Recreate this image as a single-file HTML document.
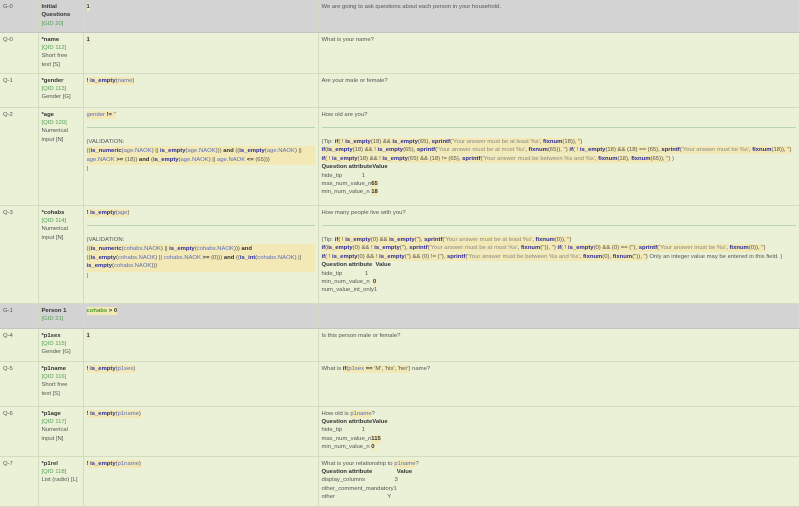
<!DOCTYPE html>
<html><head><meta charset="utf-8"><style>
*{margin:0;padding:0;box-sizing:border-box}
body{width:800px;height:505px;overflow:hidden;background:#eaf1d6;font-family:"Liberation Sans",sans-serif;font-size:5.9px;line-height:8.4px;color:#555}
table{border-collapse:collapse;table-layout:fixed;width:800px}
td{vertical-align:top;padding:3px 3px;border-bottom:1px solid #d4dcc0;border-right:1px solid #d4dcc0}
tr.g td{background:#d3d3d3;border-bottom:1px solid #c4c4c4}
b{color:#333}
.q{color:#55a055}
.h{background:#f2e9b6;padding:1px 0}
.f{color:#2a2a9c;font-weight:bold}
.v{color:#5a6ec0}
.n{color:#333;font-weight:bold}
.s{color:#888}
.gr{color:#4a9a2a;font-weight:bold}
hr{border:0;border-top:1px solid #b8d4b0;margin:8px 0 10px}
.blk{background:#f2e9b6;display:block;padding:1px 0}
</style></head><body>
<table>
<colgroup><col style="width:38px"><col style="width:45px"><col style="width:235px"><col></colgroup>
<tr class="g" style="height:32px"><td>G-0</td><td><b>Initial Questions</b><br><span class="q">[GID 20]</span></td><td><span class="h n">1</span></td><td>We are going to ask questions about each person in your household.</td></tr>
<tr style="height:41px"><td>Q-0</td><td><b>*name</b><br><span class="q">[QID 112]</span><br>Short free<br>text [S]</td><td><span class="h n">1</span></td><td>What is your name?</td></tr>
<tr style="height:34px"><td>Q-1</td><td><b>*gender</b><br><span class="q">[QID 113]</span><br>Gender [G]</td><td><span class="h"><span class="n">! </span><span class="f">is_empty</span>(<span class="v">name</span>)</span></td><td>Are your male or female?</td></tr>
<tr style="height:98px"><td>Q-2</td><td><b>*age</b><br><span class="q">[QID 120]</span><br>Numerical input [N]</td><td><span class="h"><span class="v">gender</span> <b>!=</b> ''</span><hr>(VALIDATION:<span class="blk">((<span class="f">is_numeric</span>(<span class="v">age.NAOK</span>) || <span class="f">is_empty</span>(<span class="v">age.NAOK</span>))) <b>and</b> ((<span class="f">is_empty</span>(<span class="v">age.NAOK</span>) || <span class="v">age.NAOK</span> <b>&gt;=</b> (18)) <b>and</b> (<span class="f">is_empty</span>(<span class="v">age.NAOK</span>) || <span class="v">age.NAOK</span> <b>&lt;=</b> (65)))</span>)</td>
<td>How old are you?<hr>(Tip: <span class="h"><span class="f">if</span>( ! <span class="f">is_empty</span>(18) &amp;&amp; <span class="f">is_empty</span>(65), <span class="f">sprintf</span>(<span class="s">'Your answer must be at least %s'</span>, <span class="f">fixnum</span>(18)), '')</span><br><span class="h"><span class="f">if</span>(<span class="f">is_empty</span>(18) &amp;&amp; ! <span class="f">is_empty</span>(65), <span class="f">sprintf</span>(<span class="s">'Your answer must be at most %s'</span>, <span class="f">fixnum</span>(65)), '') <span class="f">if</span>( ! <span class="f">is_empty</span>(18) &amp;&amp; (18) == (65), <span class="f">sprintf</span>(<span class="s">'Your answer must be %s'</span>, <span class="f">fixnum</span>(18)), '')</span><br><span class="h"><span class="f">if</span>( ! <span class="f">is_empty</span>(18) &amp;&amp; ! <span class="f">is_empty</span>(65) &amp;&amp; (18) != (65), <span class="f">sprintf</span>(<span class="s">'Your answer must be between %s and %s'</span>, <span class="f">fixnum</span>(18), <span class="f">fixnum</span>(65)), '')</span> )<br><b>Question attributeValue</b><br>hide_tip&nbsp;&nbsp;&nbsp;&nbsp;&nbsp;&nbsp;&nbsp;&nbsp;&nbsp;&nbsp;&nbsp;&nbsp;1<br>max_num_value_n<span class="h n">65</span><br>min_num_value_n <span class="h n">18</span></td></tr>
<tr style="height:98px"><td>Q-3</td><td><b>*cohabs</b><br><span class="q">[QID 114]</span><br>Numerical input [N]</td><td><span class="h"><span class="n">! </span><span class="f">is_empty</span>(<span class="v">age</span>)</span><hr>(VALIDATION:<span class="blk">((<span class="f">is_numeric</span>(<span class="v">cohabs.NAOK</span>) || <span class="f">is_empty</span>(<span class="v">cohabs.NAOK</span>))) <b>and</b><br>((<span class="f">is_empty</span>(<span class="v">cohabs.NAOK</span>) || <span class="v">cohabs.NAOK</span> <b>&gt;=</b> (0))) <b>and</b> ((<span class="f">is_int</span>(<span class="v">cohabs.NAOK</span>) ||<br><span class="f">is_empty</span>(<span class="v">cohabs.NAOK</span>)))</span>)</td>
<td>How many people live with you?<hr>(Tip: <span class="h"><span class="f">if</span>( ! <span class="f">is_empty</span>(0) &amp;&amp; <span class="f">is_empty</span>(''), <span class="f">sprintf</span>(<span class="s">'Your answer must be at least %s'</span>, <span class="f">fixnum</span>(0)), '')</span><br><span class="h"><span class="f">if</span>(<span class="f">is_empty</span>(0) &amp;&amp; ! <span class="f">is_empty</span>(''), <span class="f">sprintf</span>(<span class="s">'Your answer must be at most %s'</span>, <span class="f">fixnum</span>('')), '') <span class="f">if</span>( ! <span class="f">is_empty</span>(0) &amp;&amp; (0) == (''), <span class="f">sprintf</span>(<span class="s">'Your answer must be %s'</span>, <span class="f">fixnum</span>(0)), '')</span><br><span class="h"><span class="f">if</span>( ! <span class="f">is_empty</span>(0) &amp;&amp; ! <span class="f">is_empty</span>('') &amp;&amp; (0) != (''), <span class="f">sprintf</span>(<span class="s">'Your answer must be between %s and %s'</span>, <span class="f">fixnum</span>(0), <span class="f">fixnum</span>('')), '')</span> Only an integer value may be entered in this field. )<br><b>Question attribute&nbsp; Value</b><br>hide_tip&nbsp;&nbsp;&nbsp;&nbsp;&nbsp;&nbsp;&nbsp;&nbsp;&nbsp;&nbsp;&nbsp;&nbsp;&nbsp;&nbsp;1<br>min_num_value_n&nbsp; <span class="h n">0</span><br>num_value_int_only1</td></tr>
<tr class="g" style="height:25px"><td>G-1</td><td><b>Person 1</b><br><span class="q">[GID 21]</span></td><td><span class="h"><span class="gr">cohabs</span> <b>&gt; 0</b></span></td><td></td></tr>
<tr style="height:33px"><td>Q-4</td><td><b>*p1sex</b><br><span class="q">[QID 115]</span><br>Gender [G]</td><td><span class="h n">1</span></td><td>Is this person male or female?</td></tr>
<tr style="height:45px"><td>Q-5</td><td><b>*p1name</b><br><span class="q">[QID 116]</span><br>Short free<br>text [S]</td><td><span class="h"><span class="n">! </span><span class="f">is_empty</span>(<span class="v">p1sex</span>)</span></td><td>What is <span class="h"><span class="f">if</span>(<span class="v">p1sex</span> <b>==</b> 'M', 'his', 'her')</span> name?</td></tr>
<tr style="height:50px"><td>Q-6</td><td><b>*p1age</b><br><span class="q">[QID 117]</span><br>Numerical input [N]</td><td><span class="h"><span class="n">! </span><span class="f">is_empty</span>(<span class="v">p1name</span>)</span></td><td>How old is <span class="h v">p1name</span>?<br><b>Question attributeValue</b><br>hide_tip&nbsp;&nbsp;&nbsp;&nbsp;&nbsp;&nbsp;&nbsp;&nbsp;&nbsp;&nbsp;&nbsp;&nbsp;1<br>max_num_value_n<span class="h n">115</span><br>min_num_value_n <span class="h n">0</span></td></tr>
<tr style="height:50px"><td>Q-7</td><td><b>*p1rel</b><br><span class="q">[QID 118]</span><br>List (radio) [L]</td><td><span class="h"><span class="n">! </span><span class="f">is_empty</span>(<span class="v">p1name</span>)</span></td><td>What is your relationship to <span class="h v">p1name</span>?<br><b>Question attribute&nbsp;&nbsp;&nbsp;&nbsp;&nbsp;&nbsp;&nbsp;&nbsp;&nbsp;&nbsp;&nbsp;&nbsp;&nbsp;&nbsp; Value</b><br>display_columns&nbsp;&nbsp;&nbsp;&nbsp;&nbsp;&nbsp;&nbsp;&nbsp;&nbsp;&nbsp;&nbsp;&nbsp;&nbsp;&nbsp;&nbsp;&nbsp;&nbsp; 3<br>other_comment_mandatory1<br>other&nbsp;&nbsp;&nbsp;&nbsp;&nbsp;&nbsp;&nbsp;&nbsp;&nbsp;&nbsp;&nbsp;&nbsp;&nbsp;&nbsp;&nbsp;&nbsp;&nbsp;&nbsp;&nbsp;&nbsp;&nbsp;&nbsp;&nbsp;&nbsp;&nbsp;&nbsp;&nbsp;&nbsp;&nbsp;&nbsp;&nbsp; Y</td></tr>
</table>
</body></html>
